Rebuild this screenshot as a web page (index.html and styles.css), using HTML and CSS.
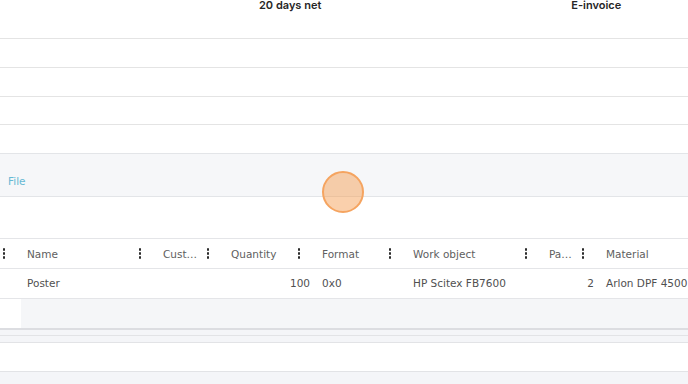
FILE: index.html
```html
<!DOCTYPE html>
<html>
<head>
<meta charset="utf-8">
<link rel="stylesheet" href="styles.css">
</head>
<body>
<div class="page">
  <section class="summary">
    <div class="srow first">
      <span class="sval v1">20 days net</span>
      <span class="sval v2">E-invoice</span>
    </div>
    <div class="srow"></div>
    <div class="srow"></div>
    <div class="srow last"></div>
  </section>

  <div class="tabs">
    <span class="tab">File</span>
  </div>

  <div class="spacer"></div>

  <div class="table">
    <div class="thead">
      <div class="th c0"><span class="lbl"></span><span class="kebab"><i></i><i></i><i></i></span></div>
      <div class="th c1"><span class="lbl">Name</span><span class="kebab"><i></i><i></i><i></i></span></div>
      <div class="th c2"><span class="lbl">Customer</span><span class="kebab"><i></i><i></i><i></i></span></div>
      <div class="th c3"><span class="lbl">Quantity</span><span class="kebab"><i></i><i></i><i></i></span></div>
      <div class="th c4"><span class="lbl">Format</span><span class="kebab"><i></i><i></i><i></i></span></div>
      <div class="th c5"><span class="lbl">Work object</span><span class="kebab"><i></i><i></i><i></i></span></div>
      <div class="th c6"><span class="lbl">Pages</span><span class="kebab"><i></i><i></i><i></i></span></div>
      <div class="th c7"><span class="lbl">Material</span></div>
    </div>
    <div class="trow">
      <div class="td"></div>
      <div class="td">Poster</div>
      <div class="td"></div>
      <div class="td num">100</div>
      <div class="td">0x0</div>
      <div class="td">HP Scitex FB7600</div>
      <div class="td num">2</div>
      <div class="td">Arlon DPF 4500</div>
    </div>
    <div class="trow new">
      <div class="td blank"></div>
      <div class="td"></div>
      <div class="td"></div>
      <div class="td"></div>
      <div class="td"></div>
      <div class="td"></div>
      <div class="td"></div>
      <div class="td"></div>
    </div>
  </div>

  <div class="foot">
    <div class="band b1"></div>
    <div class="band b2"></div>
    <div class="white"></div>
    <div class="band b3"></div>
  </div>

  <div class="cursor"></div>
</div>
</body>
</html>
```

FILE: styles.css
```css
html, body {
  margin: 0;
  padding: 0;
  background: #ffffff;
}
body {
  font-family: "DejaVu Sans", "Noto Sans", sans-serif;
  font-size: 10.5px;
  color: #555555;
  width: 688px;
  height: 384px;
  overflow: hidden;
}
.page {
  position: relative;
  width: 688px;
  height: 384px;
  overflow: hidden;
}

/* summary rows */
.summary {
  display: flex;
  flex-direction: column;
}
.srow {
  height: 28px;
  border-bottom: 1px solid #e4e4e4;
}
.srow.first {
  height: 38px;
  display: flex;
  align-items: flex-start;
}
.srow.last {
  height: 27px;
}
.sval {
  font-family: "Inter", "DejaVu Sans", sans-serif;
  font-weight: 600;
  font-size: 11px;
  line-height: 14px;
  color: #262626;
  margin-top: -2px;
}
.v1 { margin-left: 259px; }
.v2 { margin-left: 250px; }

/* tabs band */
.tabs {
  margin-top: 28px;
  height: 42px;
  background: #f6f7f9;
  border-top: 1px solid #e3e5e8;
  border-bottom: 1px solid #e3e5e8;
  display: flex;
  align-items: flex-end;
  padding: 0 8px;
}
.tab {
  color: #66b9d4;
  font-size: 10.5px;
  line-height: 14px;
  margin-bottom: 8px;
}
.spacer {
  height: 41px;
}

/* table */
.table {
  border-top: 1px solid #e4e5e8;
  white-space: nowrap;
}
.thead, .trow {
  display: grid;
  grid-template-columns: 19px 136px 68px 91px 91px 136px 57px 120px;
  height: 29px;
  border-bottom: 1px solid #e4e5e8;
}
.th {
  display: flex;
  align-items: center;
  min-width: 0;
  color: #606060;
}
.lbl {
  flex: 1;
  min-width: 0;
  padding-left: 8px;
  overflow: hidden;
  text-overflow: ellipsis;
  padding-right: 8px;
}
.kebab {
  width: 4px;
  margin-right: 13px;
  display: flex;
  flex-direction: column;
  align-items: center;
  gap: 1.5px;
}
.kebab i {
  display: block;
  width: 2.5px;
  height: 2.5px;
  border-radius: 50%;
  background: #2b2b2b;
}
.c0 .lbl { padding: 0; flex: 0; }
.c0 .kebab { margin-left: auto; }
.td {
  display: flex;
  align-items: center;
  padding-left: 8px;
  padding-bottom: 2px;
  color: #505050;
  overflow: hidden;
}
.td.num {
  justify-content: flex-end;
  padding-left: 0;
  padding-right: 4px;
}
.trow.new {
  background: #f5f6f8;
  border-bottom: 2px solid #dcdde1;
}
.trow.new .td.blank {
  background: #ffffff;
  margin-right: -2px;
}

/* footer */
.foot {
  display: flex;
  flex-direction: column;
}
.band {
  background: #f4f5f8;
  border-bottom: 1px solid #e2e3e6;
}
.b1 { height: 5px; }
.b2 { height: 6px; }
.white { height: 28px; }
.b3 { height: 13px; border-top: 1px solid #e2e3e6; border-bottom: 0; }

/* cursor highlight overlay */
.cursor {
  position: absolute;
  left: 322px;
  top: 171px;
  width: 38px;
  height: 38px;
  border-radius: 50%;
  background: rgba(245, 150, 70, 0.45);
  border: 2px solid #f5a460;
}
```
